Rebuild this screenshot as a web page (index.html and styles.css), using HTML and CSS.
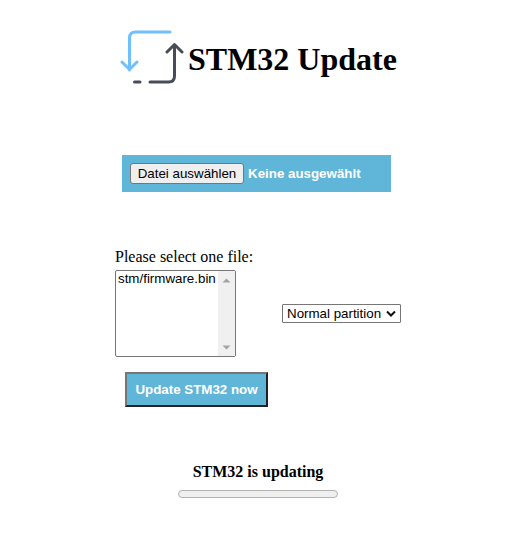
FILE: index.html
```html
<!DOCTYPE html>
<html lang="en">
<head>
<meta charset="utf-8">
<title>STM32 Update</title>
<link rel="stylesheet" href="styles.css">
</head>
<body>
<header class="title">
  <svg class="logo" viewBox="0 0 64 64" fill="none" stroke-width="3" stroke-linecap="round" stroke-linejoin="round">
    <path stroke="#70c0ff" d="M50 7H15.500Q9.500 7 9.500 13V45M2 37l7.500 7.500L17 37"/>
    <path stroke="#474d58" d="M14.500 57H20M30 57H48.500Q54.500 57 54.500 51V20M47 27l7.500-7.500L62 27"/>
  </svg>
  <h1>STM32 Update</h1>
</header>
<div class="upload">
  <button class="choose" type="button">Datei auswählen</button>
  <span class="chosen">Keine ausgewählt</span>
</div>
<form class="form">
  <div class="label">Please select one file:</div>
  <div class="row">
    <div class="list">
      <div class="option">stm/firmware.bin</div>
      <div class="scroll">
        <svg width="9" height="5"><path d="M0.500 4.500L4.500 0.500L8.500 4.500Z" fill="#a3a3a3"/></svg>
        <svg width="9" height="5"><path d="M0.500 0.500L4.500 4.500L8.500 0.500Z" fill="#a3a3a3"/></svg>
      </div>
    </div>
    <div class="partition">
      <span class="value">Normal partition</span>
      <svg width="10" height="7" fill="none" stroke="#111" stroke-width="2"><path d="M1 1.500L5 5.500L9 1.500"/></svg>
    </div>
  </div>
  <button class="update" type="button">Update STM32 now</button>
</form>
<section class="status">
  <div class="message">STM32 is updating</div>
  <div class="progress"></div>
</section>
</body>
</html>
```

FILE: styles.css
```css
* { box-sizing: border-box; }
body {
  margin: 0;
  padding-top: 25px;
  background: #fff;
  color: #000;
  font: 16px "Liberation Serif", "Times New Roman", serif;
}
.title {
  display: flex;
  align-items: center;
  height: 64px;
  margin-left: 120px;
}
.logo { width: 64px; height: 64px; margin-right: 4px; }
h1 { margin: 0; padding-top: 4px; font-size: 32px; line-height: 36px; white-space: nowrap; }
.upload {
  display: flex;
  align-items: center;
  gap: 4px;
  width: 269px;
  height: 37px;
  margin: 66px 0 0 122px;
  padding: 0 8px;
  background: #5fb6d9;
}
.choose {
  width: 114px;
  height: 21px;
  padding: 0;
  border: 1px solid #767676;
  border-radius: 3px;
  background: #efefef;
  color: #000;
  font: 13.333px/19px "Liberation Sans", Arial, sans-serif;
  white-space: nowrap;
}
.chosen {
  color: #fff;
  font: bold 13.333px/19px "Liberation Sans", Arial, sans-serif;
}
.form { width: 286px; margin: 56px 0 0 115px; }
.label { height: 22px; line-height: 18px; }
.row { display: flex; align-items: center; justify-content: space-between; }
.list {
  display: flex;
  justify-content: space-between;
  width: 121px;
  height: 87px;
  border: 1px solid #767676;
  border-radius: 2px;
  font: 13.333px/16px "Liberation Sans", Arial, sans-serif;
}
.option { padding-left: 2px; white-space: nowrap; }
.scroll {
  display: flex;
  flex-direction: column;
  align-items: center;
  justify-content: space-between;
  width: 17px;
  padding: 7px 0 6px;
  background: #f0f0f0;
}
.partition {
  display: flex;
  align-items: center;
  justify-content: space-between;
  width: 119px;
  height: 19px;
  padding: 0 4px;
  border: 1px solid #767676;
  border-radius: 1px;
  font: 13.333px/17px "Liberation Sans", Arial, sans-serif;
  white-space: nowrap;
}
.update {
  display: block;
  width: 143px;
  height: 35px;
  margin: 15px 0 0 10px;
  padding: 0;
  border: 2px solid;
  border-color: #767676 #212121 #212121 #767676;
  background: #5fb6d9;
  color: #fff;
  font: bold 13.333px/19px "Liberation Sans", Arial, sans-serif;
  white-space: nowrap;
}
.status { width: 160px; margin: 56px 0 0 178px; text-align: center; }
.message { height: 27px; line-height: 18px; font-weight: bold; }
.progress { height: 8px; border: 1px solid #b2b2b2; border-radius: 4px; background: #efefef; }
```
